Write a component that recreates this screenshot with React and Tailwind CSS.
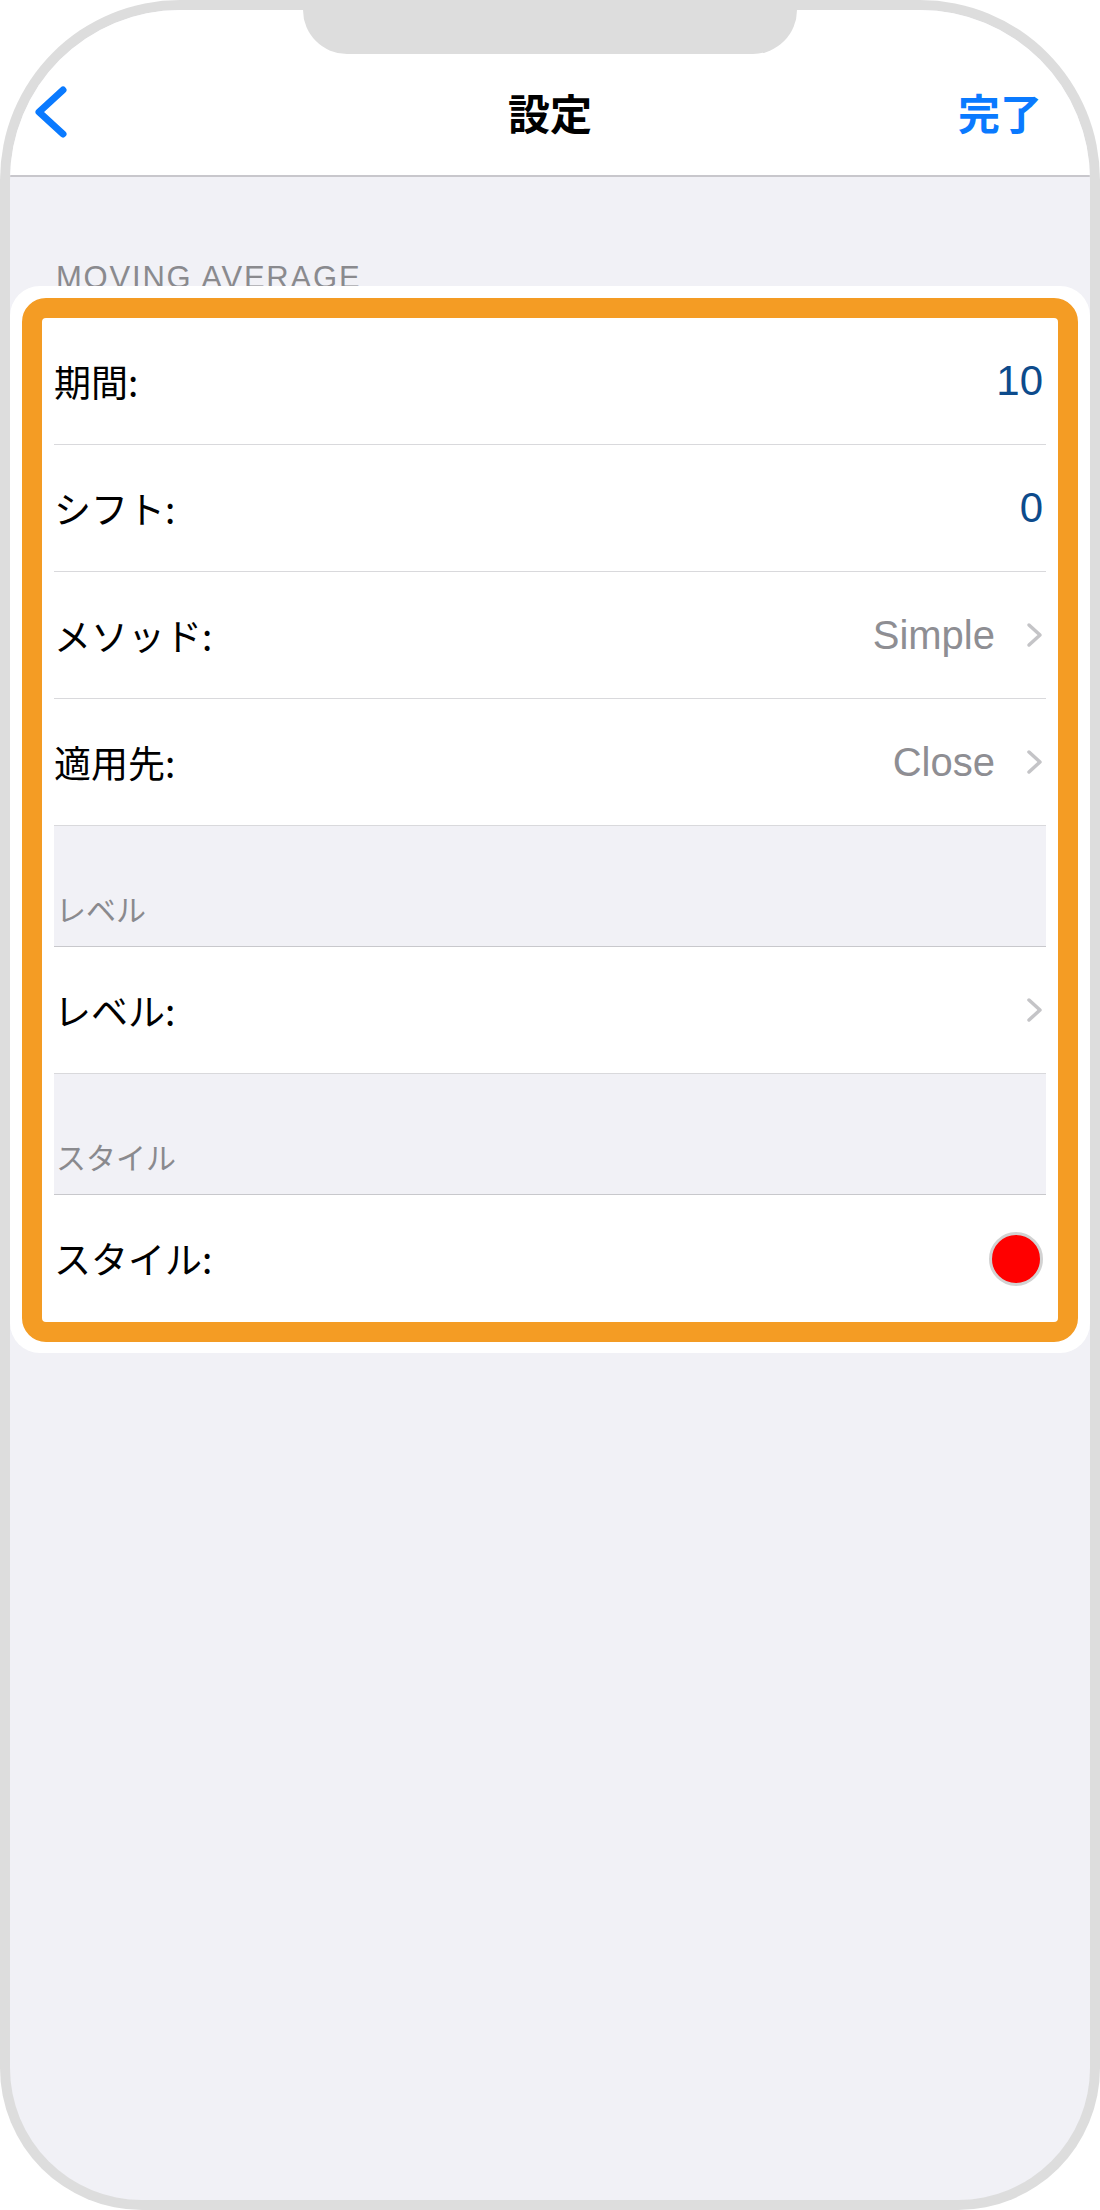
import React from "react";

const jp = "font-['Noto_Sans_CJK_JP','Noto_Sans',sans-serif]";
const latin = "font-['Liberation_Sans',Arial,sans-serif]";

function Chevron() {
  return (
    <svg width="17" height="26" viewBox="0 0 17 26" className="shrink-0">
      <path d="M3 3 L14 13 L3 23" fill="none" stroke="#c4c4c7" strokeWidth="3.5" strokeLinecap="round" strokeLinejoin="round" />
    </svg>
  );
}

function Row({ label, children, last }) {
  return (
    <div className={`h-[127px] flex items-center justify-between pr-[3px] ${last ? "" : "border-b border-[#d9d9dc]"}`}>
      <span className={`${jp} text-[37px] text-black leading-none`}>{label}</span>
      <div className="flex items-center">{children}</div>
    </div>
  );
}

function SectionHeader({ title }) {
  return (
    <div className="h-[121px] bg-[#f1f1f6] border-b border-[#c8c8cc] flex items-end pb-[23px] pl-[2px]">
      <span className={`${jp} text-[30px] text-[#8a8a8e] leading-none`}>{title}</span>
    </div>
  );
}

export default function App() {
  return (
    <div className="w-[1100px] h-[2210px] bg-white">
      <div className="relative w-[1100px] h-[2210px] bg-[#dddddd] p-[10px] rounded-t-[180px] rounded-b-[142px]">
        <div className="h-full rounded-t-[170px] rounded-b-[132px] overflow-hidden bg-[#f1f1f6] flex flex-col">
          {/* nav bar */}
          <div className="h-[167px] shrink-0 bg-white border-b-2 border-[#c8c7cc] grid grid-cols-[1fr_auto_1fr] items-center pt-[38px]">
            <div className="pl-[25px] flex items-center">
              <svg width="32" height="54" viewBox="0 0 32 54">
                <path d="M28 5 L4 27 L28 49" fill="none" stroke="#0a7aff" strokeWidth="7" strokeLinecap="round" strokeLinejoin="round" />
              </svg>
            </div>
            <h1 className={`${jp} text-[42px] font-bold text-black leading-none`}>設定</h1>
            <div className="flex justify-end pr-[48px]">
              <span className={`${jp} text-[42px] font-bold text-[#0a7aff] leading-none`}>完了</span>
            </div>
          </div>

          {/* section header, partly covered by the highlighted card */}
          <div className="h-[109px] shrink-0 overflow-hidden pt-[85px] pl-[46px]">
            <span className={`${latin} text-[31px] tracking-[1.8px] text-[#8a8a8e] leading-none block`}>MOVING AVERAGE</span>
          </div>

          {/* highlighted card */}
          <div className="bg-white rounded-[30px] pt-[12px] px-[12px] pb-[11px]">
            <div className="border-[20px] border-[#f49c24] rounded-[24px] bg-white px-[12px]">
              <Row label="期間:">
                <span className={`${latin} text-[42px] text-[#0d4b8c] leading-none`}>10</span>
              </Row>
              <Row label="シフト:">
                <span className={`${latin} text-[42px] text-[#0d4b8c] leading-none`}>0</span>
              </Row>
              <Row label="メソッド:">
                <span className={`${latin} text-[40px] text-[#8e8e93] leading-none mr-[31px]`}>Simple</span>
                <Chevron />
              </Row>
              <Row label="適用先:">
                <span className={`${latin} text-[40px] text-[#8e8e93] leading-none mr-[31px]`}>Close</span>
                <Chevron />
              </Row>
              <SectionHeader title="レベル" />
              <Row label="レベル:">
                <Chevron />
              </Row>
              <SectionHeader title="スタイル" />
              <Row label="スタイル:" last>
                <div className="w-[54px] h-[54px] rounded-full bg-[#ff0000] border-[3px] border-[#d2d2d2]" />
              </Row>
            </div>
          </div>

          <div className="flex-1" />
        </div>

        {/* notch */}
        <div className="absolute left-[303px] top-0 w-[494px] h-[54px] bg-[#dddddd] rounded-b-[44px]" />
      </div>
    </div>
  );
}
